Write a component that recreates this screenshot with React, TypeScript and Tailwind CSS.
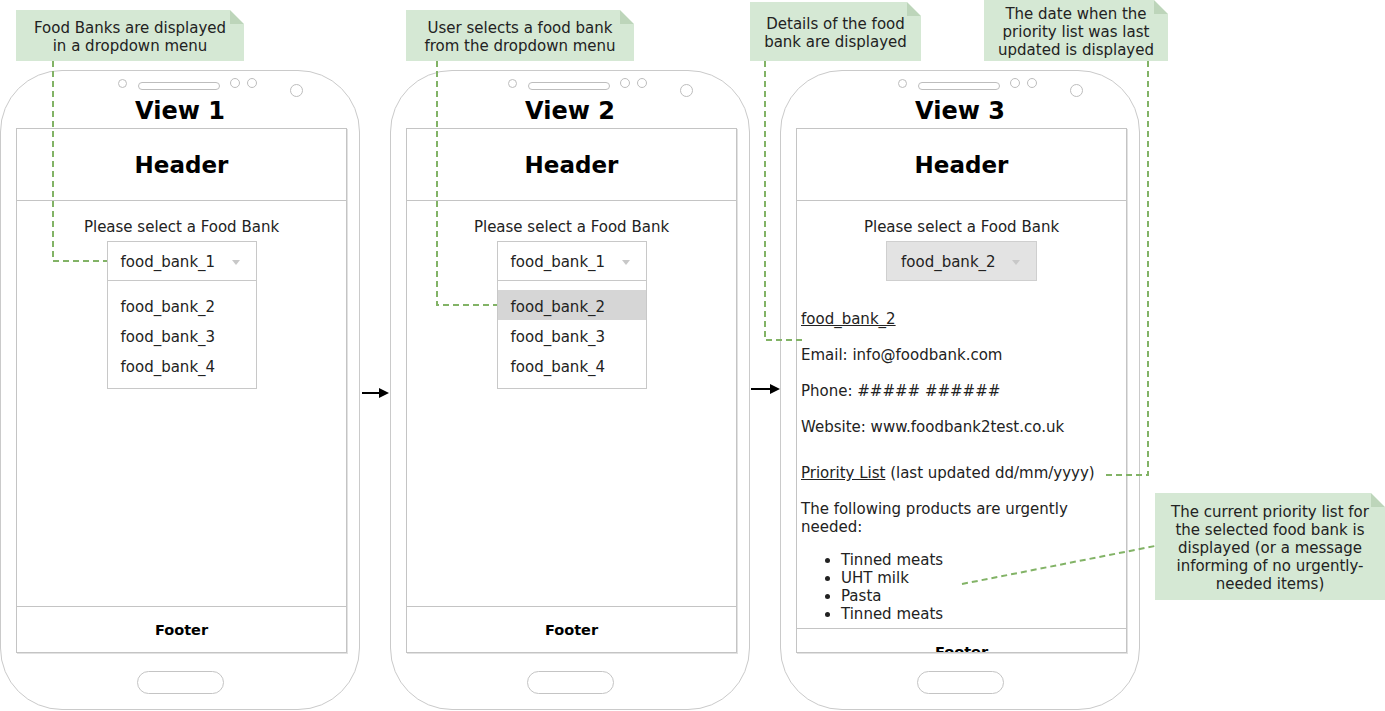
import React from 'react'

const FONT = "font-['DejaVu_Sans','Verdana',sans-serif]"

function Callout({ className, children }: { className: string; children: React.ReactNode }) {
  return (
    <div
      className={`absolute bg-[#d5e8d4] text-[#222] text-[15px] leading-[18px] text-center flex items-center justify-center pt-[2px] [clip-path:polygon(0_0,calc(100%-14px)_0,100%_14px,100%_100%,0_100%)] ${className}`}
    >
      <div className="absolute top-0 right-0 w-[14px] h-[14px] bg-[#bdd5ba] [clip-path:polygon(0_0,0_100%,100%_100%)]" />
      <div>{children}</div>
    </div>
  )
}

function Arrow() {
  return <div className="ml-auto mr-[16px] w-0 h-0 border-l-[4px] border-r-[4px] border-t-[5px] border-l-transparent border-r-transparent border-t-[#c8c8c8]" />
}

function Dropdown({ highlight }: { highlight?: boolean }) {
  const items = ['food_bank_2', 'food_bank_3', 'food_bank_4']
  return (
    <div className="mt-[5px] mx-auto w-[150px] border border-[#c8c8c8]">
      <div className="h-[39px] border-b border-[#c8c8c8] flex items-center pl-[13px] pt-[2px]">
        <span>food_bank_1</span>
        <Arrow />
      </div>
      <div className="pt-[9px] pb-[8px]">
        {items.map((it, i) => (
          <div key={it} className={`h-[30px] flex items-center pl-[13px] pt-[3px] ${highlight && i === 0 ? 'bg-[#d6d6d6]' : ''}`}>
            {it}
          </div>
        ))}
      </div>
    </div>
  )
}

function Details() {
  return (
    <>
      <div className="mt-[5px] mx-auto w-[151px] h-[40px] bg-[#e3e3e3] border border-[#cfcfcf] flex items-center pl-[14px] pt-[2px]">
        <span>food_bank_2</span>
        <Arrow />
      </div>
      <div className="pl-[4px] pr-[8px]">
        <div className="mt-[29px] underline">food_bank_2</div>
        <div className="mt-[18px]">Email: info@foodbank.com</div>
        <div className="mt-[18px]">Phone: ##### ######</div>
        <div className="mt-[18px]">Website: www.foodbank2test.co.uk</div>
        <div className="mt-[28px]">
          <span className="underline">Priority List</span> (last updated dd/mm/yyyy)
        </div>
        <div className="mt-[18px]">
          The following products are urgently
          <br />
          needed:
        </div>
        <ul className="mt-[15px] list-disc pl-[40px]">
          <li>Tinned meats</li>
          <li>UHT milk</li>
          <li>Pasta</li>
          <li>Tinned meats</li>
        </ul>
      </div>
    </>
  )
}

function Phone({ left, title, view }: { left: string; title: string; view: 1 | 2 | 3 }) {
  return (
    <div className={`absolute top-[70px] ${left} w-[360px] h-[640px] rounded-[62px] border border-[#cacaca] bg-white flex flex-col`}>
      {/* sensors */}
      <div className="h-[26px] pl-[117px] flex items-start shrink-0">
        <div className="mt-[8px] w-[9px] h-[9px] rounded-full border border-[#bdbdbd]" />
        <div className="mt-[11px] ml-[11px] w-[82px] h-[8px] rounded-full border border-[#bdbdbd]" />
        <div className="mt-[7px] ml-[10px] w-[10px] h-[10px] rounded-full border border-[#bdbdbd]" />
        <div className="mt-[7px] ml-[7px] w-[10px] h-[10px] rounded-full border border-[#bdbdbd]" />
        <div className="mt-[13px] ml-[33px] w-[13px] h-[13px] rounded-full border border-[#bdbdbd]" />
      </div>
      <div className="h-[31px] leading-[29px] text-center text-[24px] font-bold text-black shrink-0">{title}</div>
      <div className="ml-[15px] w-[331px] h-[525px] border border-[#c4c4c4] shadow-[1px_1px_0_#e2e2e2] flex flex-col overflow-hidden shrink-0">
        <div className="h-[72px] shrink-0 border-b border-[#c4c4c4] flex items-center justify-center pt-[2px] text-[23px] font-bold text-black">
          Header
        </div>
        <div className={`${view === 3 ? 'shrink-0' : 'flex-1'} text-[15px] leading-[18px] text-[#222]`}>
          <div className="mt-[17px] text-center">Please select a Food Bank</div>
          {view === 3 ? <Details /> : <Dropdown highlight={view === 2} />}
        </div>
        <div className={`${view === 3 ? 'mt-[5px]' : ''} h-[46px] shrink-0 border-t border-[#c4c4c4] flex items-center justify-center pt-[3px] text-[14.5px] font-bold text-black`}>
          Footer
        </div>
      </div>
      <div className="mt-[18px] mx-auto w-[87px] h-[23px] rounded-[12px] border border-[#c4c4c4] shrink-0" />
    </div>
  )
}

export default function App() {
  return (
    <div className={`relative w-[1385px] h-[711px] bg-white overflow-hidden ${FONT}`}>
      <Phone left="left-0" title="View 1" view={1} />
      <Phone left="left-[390px]" title="View 2" view={2} />
      <Phone left="left-[780px]" title="View 3" view={3} />

      <Callout className="left-[16px] top-[10px] w-[228px] h-[51px]">
        Food Banks are displayed
        <br />
        in a dropdown menu
      </Callout>
      <Callout className="left-[406px] top-[10px] w-[228px] h-[51px]">
        User selects a food bank
        <br />
        from the dropdown menu
      </Callout>
      <Callout className="left-[750px] top-[2px] w-[171px] h-[59px]">
        Details of the food
        <br />
        bank are displayed
      </Callout>
      <Callout className="left-[984px] top-0 w-[184px] h-[61px]">
        The date when the
        <br />
        priority list was last
        <br />
        updated is displayed
      </Callout>
      <Callout className="left-[1155px] top-[493px] w-[230px] h-[107px]">
        The current priority list for
        <br />
        the selected food bank is
        <br />
        displayed (or a message
        <br />
        informing of no urgently-
        <br />
        needed items)
      </Callout>

      <svg className="absolute inset-0 pointer-events-none" width="1385" height="711">
        <g fill="none" stroke="#82b366" strokeWidth="2" strokeDasharray="6 4">
          <path d="M53 61 V261 H107" />
          <path d="M437 61 V305 H497" />
          <path d="M765 61 V340 H805" />
          <path d="M1148 61 V475 H1102" />
          <path d="M962 584 L1155 546" />
        </g>
        <g stroke="#000" strokeWidth="2">
          <line x1="362" y1="393" x2="381" y2="393" />
          <line x1="751" y1="389" x2="771" y2="389" />
        </g>
        <g fill="#000">
          <polygon points="389,393 379,388 379,398" />
          <polygon points="780,389 770,384 770,394" />
        </g>
      </svg>
    </div>
  )
}
